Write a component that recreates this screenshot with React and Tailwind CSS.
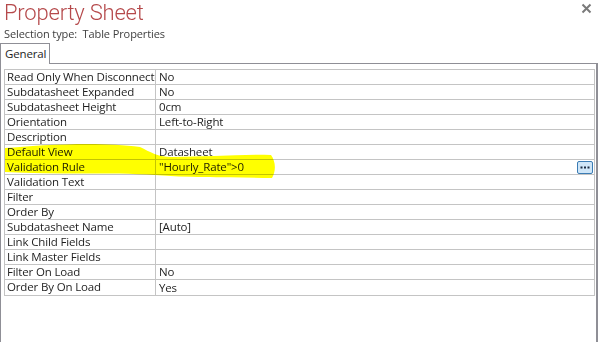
import React from "react";

const rows = [
  ["Read Only When Disconnected", "No"],
  ["Subdatasheet Expanded", "No"],
  ["Subdatasheet Height", "0cm"],
  ["Orientation", "Left-to-Right"],
  ["Description", ""],
  ["Default View", "Datasheet"],
  ["Validation Rule", "\"Hourly_Rate\">0", true],
  ["Validation Text", ""],
  ["Filter", ""],
  ["Order By", ""],
  ["Subdatasheet Name", "[Auto]"],
  ["Link Child Fields", ""],
  ["Link Master Fields", ""],
  ["Filter On Load", "No"],
  ["Order By On Load", "Yes"],
];

const App = () => {
  return (
    <div className="relative w-[599px] h-[342px] overflow-hidden bg-white font-['Open_Sans','Noto_Sans',sans-serif] text-[#1e1e1e]">
      {/* Header */}
      <div className="flex justify-between">
        <h1 className="whitespace-nowrap pl-[4px] font-['Roboto','Open_Sans',sans-serif] text-[22px] leading-[26px] font-light tracking-[-0.2px] text-[#b5494b]">
          Property Sheet
        </h1>
        <button className="mr-[7px] mt-[3px] h-[11px] w-[11px]" aria-label="Close">
          <svg viewBox="0 0 11 11" className="h-[11px] w-[11px]">
            <path d="M1.5 1.5 L9.5 9.5 M9.5 1.5 L1.5 9.5" stroke="#7a7a7a" strokeWidth="2" />
          </svg>
        </button>
      </div>
      <div className="whitespace-nowrap pl-[4px] pt-[1px] text-[11px] leading-[14px] tracking-[-0.1px] text-[#404040]">
        Selection type:&nbsp;&nbsp;Table Properties
      </div>

      {/* Tab */}
      <div className="mt-[2px] flex">
        <div className="relative z-10 -mb-px h-[21px] w-[50px] whitespace-nowrap border border-b-0 border-[#8f8f96] bg-white pl-[4px] text-[11.5px] leading-[20px] tracking-[-0.15px]">
          General
        </div>
      </div>

      {/* Panel */}
      <div className="h-[300px] w-[598px] border border-r-2 border-[#8f8f96] bg-white pl-[3px] pt-[5px]">
        <div className="w-[591px] border border-[#c4c4c4]">
          {rows.map(([name, value, builder], i) => (
            <div
              key={name}
              className={`flex h-[15px] ${i < rows.length - 1 ? "border-b border-[#c4c4c4]" : ""}`}
            >
              <div className="w-[151px] shrink-0 overflow-hidden whitespace-nowrap border-r border-[#c4c4c4] pl-[2px] text-[11.5px] leading-[14px] tracking-[-0.15px]">
                {name}
              </div>
              <div className="flex flex-1 items-center justify-between whitespace-nowrap pl-[3px] pr-[1px] text-[11.5px] leading-[14px] tracking-[-0.15px]">
                <span>{value}</span>
                {builder && (
                  <span className="flex h-[13px] w-[16px] items-center justify-center rounded-[2px] border border-[#3b7cb4] bg-[#cfe6f8]">
                    <svg viewBox="0 0 10 3" className="h-[3px] w-[10px]">
                      <rect x="0.5" y="0.5" width="2" height="2" fill="#1a2a40" />
                      <rect x="4" y="0.5" width="2" height="2" fill="#1a2a40" />
                      <rect x="7.5" y="0.5" width="2" height="2" fill="#1a2a40" />
                    </svg>
                  </span>
                )}
              </div>
            </div>
          ))}
        </div>
      </div>

      {/* Highlighter marks */}
      <svg className="pointer-events-none absolute left-0 top-0 mix-blend-multiply" width="599" height="342">
        <path
          d="M5 148 C 40 145 100 141 140 147 C 150 152 158 157 172 157 C 205 157 240 154 271 155 C 276 162 276 171 272 178 C 230 177 190 178 155 175 C 110 172 55 175 5 172 Z"
          fill="#ffff00"
        />
      </svg>
    </div>
  );
};

export default App;
